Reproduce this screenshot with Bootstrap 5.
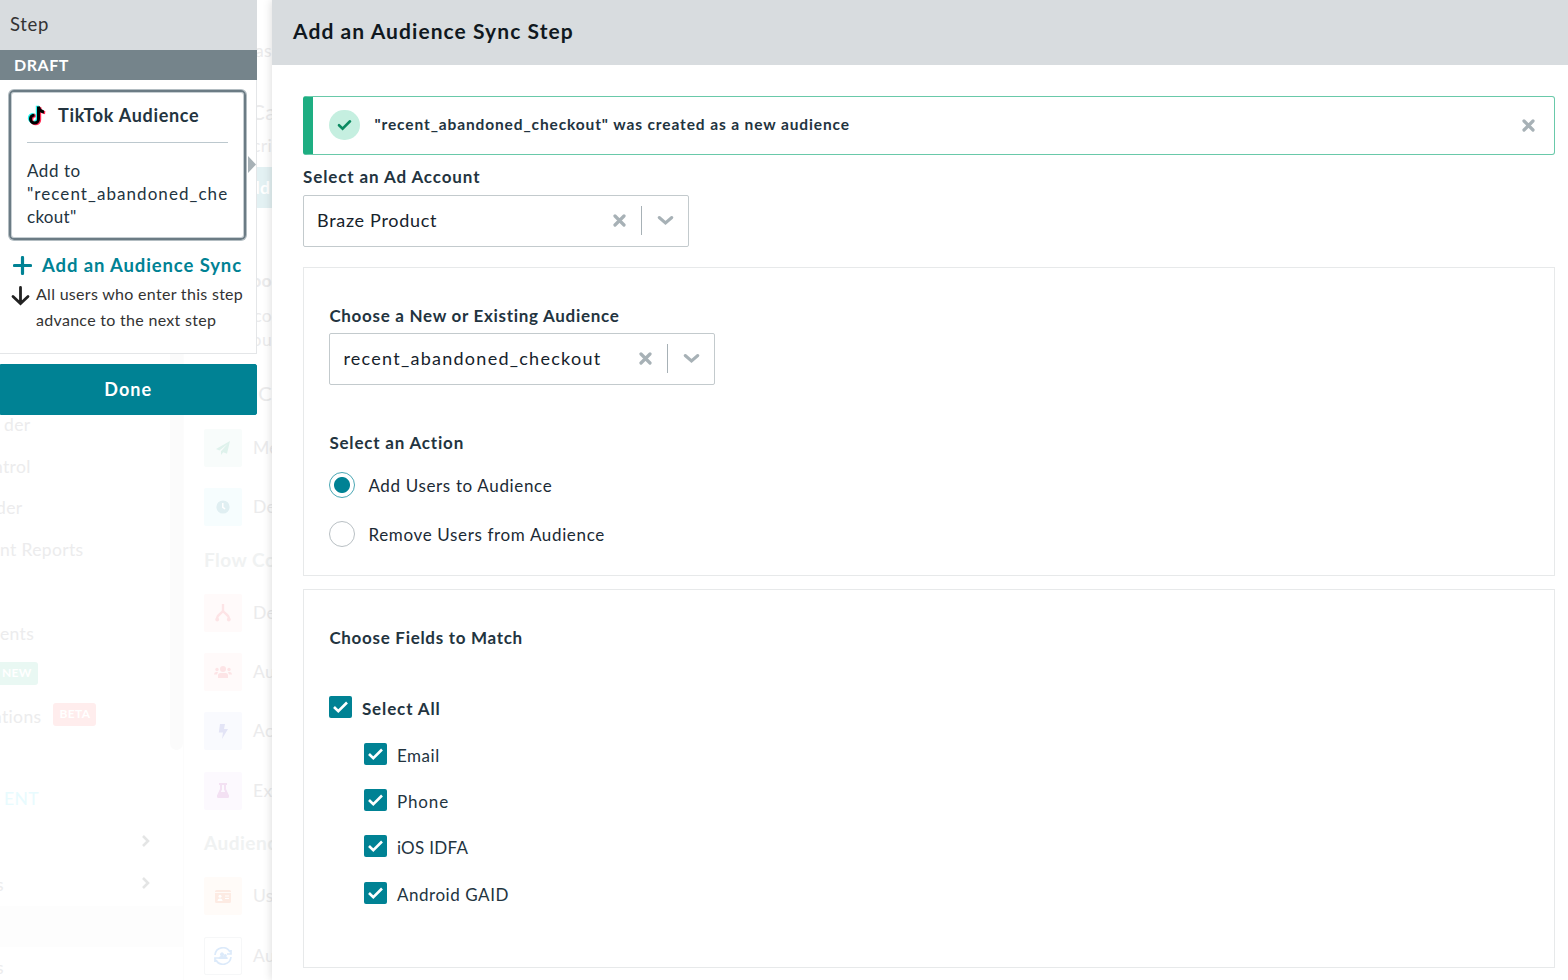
<!DOCTYPE html>
<html lang="en">
<head>
<meta charset="utf-8">
<meta name="viewport" content="width=device-width, initial-scale=1">
<title>Add an Audience Sync Step</title>
<link rel="stylesheet" href="https://cdn.jsdelivr.net/npm/bootstrap@5.3.0/dist/css/bootstrap.min.css">
<style>
:root{--teal:#008294;--ink:#23343f;--mute:#a7b1b6;--bs-body-font-family:Lato,"Open Sans",sans-serif}
body{width:1568px;height:980px;color:var(--ink);letter-spacing:.65px;font-size:17px;line-height:24px;white-space:nowrap}
svg{display:block;flex:none}
/* tracking steps */
.k1{letter-spacing:.3px}
.k2{letter-spacing:.55px}
.k3{letter-spacing:.7px}
.k4{letter-spacing:.88px}
.k5{letter-spacing:1.07px}
.k6{letter-spacing:1.26px}
/* dimmed page behind the drawer */
.side{width:183px;padding-top:404px;color:#ececed;font-size:17.5px;letter-spacing:.35px}
.side .item{height:41.8px}
.side .shade{background:#fdfdfd}
.cut-s{margin-left:-4px}
.cut-m{margin-left:-7px}
.track{width:13px;height:750px;background:#fbfbfb;border-radius:0 0 7px 7px;left:170px;top:0}
.tag{height:23px;font-size:12px;color:#fff;border-radius:3px;padding:0 6px;line-height:22px;margin-bottom:5px}
.rail{border-left:1px solid #fcfcfc;width:89px;padding-left:20px;color:#ebebec;font-size:17.5px;letter-spacing:.35px}
.rail .peek{height:428px;position:relative}
.rail .peek span{position:absolute;left:auto;right:0}
.tile{width:38px;height:38px;border-radius:2px}
.entry{height:39px;margin-bottom:20.3px;gap:11px}
.grp{font-size:19px;font-weight:700;color:#f0f2f2;height:46.6px;line-height:26px;letter-spacing:.5px}
/* step panel */
.step{width:256.500px}
.step-head{height:50px;background:#d8dcdf;font-size:18.5px;color:#333;padding:0 0 3px 10px}
.step-draft{height:30px;background:#75848b;color:#fff;font-size:16px;padding:0 0 1px 14px}
.step-body{height:274px;background:#fff;border:solid #e4e6e8;border-width:0 1px 1px 0;padding:10px 9px 0 9px}
.tt-card{width:237px;height:150px;border:2px solid #6b7b84;border-radius:5px;box-shadow:inset 0 0 0 1px #c6ced2,0 0 0 1px #b3bdc2;padding:9px 16px 0}
.tt-head{height:42px;border-bottom:1px solid #bcc8ce;gap:11px;padding-bottom:13px}
.tt-text{line-height:23px;padding-top:16px}
.notch{left:248px;top:156px;width:8px;height:17px;background:#a7b1b6;clip-path:polygon(0 0,100% 50%,0 100%)}
.add-link{color:var(--teal);font-size:18.5px;gap:10px;margin:13px 0 0 4px}
.note{font-size:16px;color:#333;gap:6px;line-height:26px;margin:4px 0 0 2px}
.btn-teal{--bs-btn-color:#fff;--bs-btn-bg:var(--teal);--bs-btn-border-color:var(--teal);height:51px;margin-top:10px;font-size:18px;font-weight:700;border-radius:0 2px 2px 0}
/* drawer */
.drawer{left:272px;right:0;background:#fff;box-shadow:0 0 9px rgba(0,0,0,.16)}
.drawer-head{height:65px;background:#d8dcdf;color:#101820;font-size:21px;padding:0 0 4px 21px}
.drawer-body{padding:30.500px 13px 0 31px}
.done-note{height:59px;border:1px solid #69c9a9;border-left:10px solid #1eae82;border-radius:3px;font-size:15.5px;padding:0 19px 0 16px}
.done-note>span{position:relative;top:-1px}
.ok{width:30.500px;height:30.500px;background:#c5efe0;margin-right:15px}
.pick{width:386px;height:52px;border:1px solid #c3cacd;border-radius:2px;font-size:18px;color:#16222b;padding:0 14px 1px 13px}
.bar{width:1px;height:29px;background:#a7b1b6;margin:0 15px}
.box{border:1px solid #e7e9ea;padding-left:25.400px}
.form-check-input.rd{width:26px;height:26px;margin:0;border:1px solid #b9c0c4;background-image:none}
.form-check-input.rd:checked{background:radial-gradient(circle,var(--teal) 7.5px,#fff 8.5px);border-color:#4aa7b4}
.opt{gap:13px;height:26px;color:#1b2a35}
.opt span{position:relative;top:1px}
.cb{width:22.500px;height:22px;background:var(--teal);border-radius:2px;margin-right:10px}
.fld{height:46.4px}
.fld .lbl,.sel-all .lbl{position:relative;top:2px}
</style>
</head>
<body class="position-relative overflow-hidden">

<div class="d-flex position-absolute top-0 start-0 h-100">
  <div class="side position-relative">
    <div class="track position-absolute"></div>
    <div class="item d-flex align-items-center"><span class="ps-1">der</span></div>
    <div class="item d-flex align-items-center"><span class="cut-m">ntrol</span></div>
    <div class="item d-flex align-items-center"><span class="cut-s">der</span></div>
    <div class="item d-flex align-items-center">nt Reports</div>
    <div class="item"></div>
    <div class="item d-flex align-items-center">ents</div>
    <div class="item d-flex align-items-center"><span class="tag fw-bold cut-s" style="background:#e9f8f3">NEW</span></div>
    <div class="item d-flex align-items-center"><span class="cut-m">ations</span><span class="tag fw-bold" style="background:#ffeded;margin-left:12px">BETA</span></div>
    <div class="item"></div>
    <div class="item d-flex align-items-center pb-1" style="color:#e8fbfe"><span class="ps-1">ENT</span></div>
    <div class="item d-flex align-items-center justify-content-end" style="padding:0 30px 3px 0"><svg width="14" height="12" viewBox="0 0 14 12"><path d="M4 1l5 5-5 5" fill="none" stroke="#e4e5e5" stroke-width="2.600"/></svg></div>
    <div class="item d-flex align-items-center justify-content-between" style="padding-right:30px"><span class="cut-s">s</span><svg class="mb-1" width="14" height="12" viewBox="0 0 14 12"><path d="M4 1l5 5-5 5" fill="none" stroke="#e4e5e5" stroke-width="2.600"/></svg></div>
    <div class="item shade"></div>
    <div class="item d-flex align-items-center"><span class="cut-s">s</span></div>
  </div>
  <div class="rail">
    <div class="peek">
      <span style="top:39px">as</span><span style="top:100px;font-size:21px;right:-4px">Ca</span><span style="top:134px">cri</span>
      <span class="text-white fw-bold text-center" style="top:167px;height:41px;line-height:41px;background:#e3f1f3;width:24px;right:0">dd</span>
      <span class="fw-bold" style="top:269px">oo</span><span style="top:304px">co</span><span style="top:328px">ou</span><span style="top:381px;font-size:20px">C</span>
    </div>
    <div class="entry d-flex align-items-center"><div class="tile d-flex align-items-center justify-content-center flex-shrink-0" style="background:#f8fcfb"><svg width="14" height="14" viewBox="0 0 14 14" fill="#dff2ec"><path d="M14 0L0 8l3.4 1.4L11.5 3 5 10.3V14l2.3-2.8 3.7 1.6z"/></svg></div>Me</div>
    <div class="entry d-flex align-items-center"><div class="tile d-flex align-items-center justify-content-center flex-shrink-0" style="background:#f6fdfe"><svg width="14" height="14" viewBox="0 0 14 14"><circle cx="7" cy="7" r="6.6" fill="#e0eff2"/><path d="M6.8 3v4.3l2.3 1.5" fill="none" stroke="#fff" stroke-width="1.5"/></svg></div>De</div>
    <div class="grp">Flow Co</div>
    <div class="entry d-flex align-items-center"><div class="tile d-flex align-items-center justify-content-center flex-shrink-0" style="background:#fffafa"><svg width="16" height="18" viewBox="0 0 16 18"><path d="M8 0v6.500C7.500 9.500 2 10 2 15M8 6.500c.5 3 6 3.500 6 8.500" fill="none" stroke="#fde4e6" stroke-width="2.300"/><circle cx="2.200" cy="15.500" r="1.900" fill="#fde4e6"/><circle cx="13.800" cy="15.500" r="1.900" fill="#fde4e6"/></svg></div>De</div>
    <div class="entry d-flex align-items-center"><div class="tile d-flex align-items-center justify-content-center flex-shrink-0" style="background:#fffafa"><svg width="18" height="12" viewBox="0 0 18 12" fill="#fde4e6"><circle cx="9" cy="3" r="3"/><circle cx="3" cy="3.5" r="1.7"/><circle cx="15" cy="3.5" r="1.7"/><path d="M4 12V9.500q0-2.500 2.500-2.500h5q2.500 0 2.500 2.500V12zM0 8.500Q0 6 2 6h2L3 8.500zM18 8.500Q18 6 16 6h-2l1 2.500z"/></svg></div>Au</div>
    <div class="entry d-flex align-items-center"><div class="tile d-flex align-items-center justify-content-center flex-shrink-0" style="background:#f9fafe"><svg width="10" height="15" viewBox="0 0 10 15" fill="#e3e4f6"><path d="M2 0h5L6 5h4L4 15l1-6.500H.8z"/></svg></div>Ac</div>
    <div class="entry d-flex align-items-center"><div class="tile d-flex align-items-center justify-content-center flex-shrink-0" style="background:#fcf9fe"><svg width="12" height="15" viewBox="0 0 12 15" fill="#f3e1f3"><path fill-rule="evenodd" d="M2 0h8v2H9v4l3 6.500q.6 2.500-1.500 2.500h-9Q-.6 15 0 12.500L3 6V2H2zm3 2v4.500L3.800 9h4.400L7 6.500V2z"/></svg></div>Exp</div>
    <div class="grp">Audience</div>
    <div class="entry d-flex align-items-center"><div class="tile d-flex align-items-center justify-content-center flex-shrink-0" style="background:#fffbf8"><svg width="16" height="13" viewBox="0 0 16 13"><path d="M0 1.500Q0 0 1.500 0h13Q16 0 16 1.500V2H0zM0 3h16v8.500q0 1.500-1.500 1.500h-13Q0 13 0 11.500z" fill="#fdebe3"/><path d="M10 6h4M10 8.500h4" stroke="#fff"/><circle cx="5" cy="6.300" r="1.500" fill="#fff"/><path d="M2.500 11q0-2.500 2.500-2.500T7.500 11z" fill="#fff"/></svg></div>Us</div>
    <div class="entry d-flex align-items-center"><div class="tile d-flex align-items-center justify-content-center flex-shrink-0 border" style="border-color:#f6f7f8!important"><svg width="18" height="18" viewBox="0 0 18 18"><path d="M1 8a8 8 0 0 1 15-3M17 10a8 8 0 0 1-15 3M17 3v4h-4M1 15v-4h4" fill="none" stroke="#dceafa" stroke-width="1.7"/><path d="M4.500 12q0-2.500 2.200-3a2 2 0 1 1 2.600 0l1 .6a1.500 1.500 0 1 1 2 0q1.500.4 1.500 2.400z" fill="#dceafa"/></svg></div>Au</div>
  </div>
</div>

<aside class="step position-absolute top-0 start-0">
  <div class="step-head d-flex align-items-center"><span class="k3">Step</span></div>
  <div class="step-draft d-flex align-items-center fw-bold"><span class="k2">DRAFT</span></div>
  <div class="step-body">
    <div class="tt-card">
      <div class="tt-head d-flex align-items-center fw-bold">
        <svg width="20" height="21" viewBox="0 0 20 21" fill="none" stroke-width="3"><g stroke="#25f4ee" transform="translate(-1.200 -.8)"><path d="M11.500 1.500v12.500a4 4 0 1 1-4-4M11.500 1.500q.8 5 5.500 5.500"/></g><g stroke="#fe2c55" transform="translate(1.200 .8)"><path d="M11.500 1.500v12.500a4 4 0 1 1-4-4M11.500 1.500q.8 5 5.500 5.500"/></g><path stroke="#000" d="M11.500 1.500v12.500a4 4 0 1 1-4-4M11.500 1.500q.8 5 5.500 5.500"/></svg>
        <span class="k3" style="font-size:18px">TikTok Audience</span>
      </div>
      <div class="tt-text"><span class="k2">Add to</span><br><span class="k5">"recent_abandoned_che</span><br><span class="k1">ckout"</span></div>
    </div>
    <div class="add-link d-flex align-items-center fw-bold"><svg width="19" height="19" viewBox="0 0 19 19"><path d="M9.500 1.500v16M1.500 9.500h16" stroke="#008294" stroke-width="3.200" stroke-linecap="round"/></svg><span class="k4">Add an Audience Sync</span></div>
    <div class="note d-flex"><svg style="margin-top:5px" width="19" height="20" viewBox="0 0 19 20"><path d="M9.500 1.500v15.500M2 10.500l7.500 7 7.500-7" fill="none" stroke="#222" stroke-width="2.800" stroke-linecap="round"/></svg><div class="k1">All users who enter this step<br>advance to the next step</div></div>
  </div>
  <div class="notch position-absolute"></div>
  <button class="btn btn-teal w-100"><span class="k5">Done</span></button>
</aside>

<main class="drawer position-absolute top-0 h-100">
  <div class="drawer-head d-flex align-items-center fw-bold k5">Add an Audience Sync Step</div>
  <div class="drawer-body">
    <div class="done-note d-flex align-items-center fw-bold">
      <div class="ok rounded-circle d-flex align-items-center justify-content-center"><svg width="15" height="12" viewBox="0 0 15 12"><path d="M2 6.200l3.600 3.400L13 2.300" fill="none" stroke="#0b8a61" stroke-width="2.600" stroke-linecap="round"/></svg></div>
      <span class="k4">"recent_abandoned_checkout" was created as a new audience</span>
      <svg class="ms-auto" width="13" height="13" viewBox="0 0 13 13"><path d="M2 2l9 9M11 2l-9 9" stroke="#a7b1b6" stroke-width="3.200" stroke-linecap="round"/></svg>
    </div>
    <div class="fw-bold k4" style="margin:10px 0 6px">Select an Ad Account</div>
    <div class="pick d-flex align-items-center"><span class="k3 me-auto">Braze Product</span>
      <svg width="13" height="13" viewBox="0 0 13 13"><path d="M2 2l9 9M11 2l-9 9" stroke="#a7b1b6" stroke-width="3.200" stroke-linecap="round"/></svg><div class="bar"></div><svg width="17" height="11" viewBox="0 0 17 11"><path d="M2.200 2.500l6.300 5.500 6.300-5.500" fill="none" stroke="#a7b1b6" stroke-width="3" stroke-linecap="round"/></svg></div>

    <section class="box" style="height:309px;margin-top:20px;padding-top:36px">
      <div class="fw-bold k3">Choose a New or Existing Audience</div>
      <div class="pick d-flex align-items-center" style="margin-top:5px"><span class="k6 me-auto">recent_abandoned_checkout</span>
        <svg width="13" height="13" viewBox="0 0 13 13"><path d="M2 2l9 9M11 2l-9 9" stroke="#a7b1b6" stroke-width="3.200" stroke-linecap="round"/></svg><div class="bar"></div><svg width="17" height="11" viewBox="0 0 17 11"><path d="M2.200 2.500l6.300 5.500 6.300-5.500" fill="none" stroke="#a7b1b6" stroke-width="3" stroke-linecap="round"/></svg></div>
      <div class="fw-bold" style="margin-top:46px;letter-spacing:.8px">Select an Action</div>
      <label class="opt d-flex align-items-center" style="margin-top:17px"><input class="form-check-input rd" type="radio" name="act" checked><span>Add Users to Audience</span></label>
      <label class="opt d-flex align-items-center" style="margin-top:23px"><input class="form-check-input rd" type="radio" name="act"><span>Remove Users from Audience</span></label>
    </section>

    <section class="box" style="height:379px;margin-top:13px;padding-top:36px">
      <div class="fw-bold k3">Choose Fields to Match</div>
      <div class="sel-all d-flex align-items-center fw-bold" style="margin-top:45px"><span class="cb d-flex align-items-center justify-content-center"><svg width="17" height="14" viewBox="0 0 17 14"><path d="M2 7l4.300 4.200L15 2.500" fill="none" stroke="#fff" stroke-width="2.600"/></svg></span><span class="lbl k4">Select All</span></div>
      <div style="padding-left:35px;margin-top:12px">
        <div class="fld d-flex align-items-center"><span class="cb d-flex align-items-center justify-content-center"><svg width="17" height="14" viewBox="0 0 17 14"><path d="M2 7l4.300 4.200L15 2.500" fill="none" stroke="#fff" stroke-width="2.600"/></svg></span><span class="lbl k2">Email</span></div>
        <div class="fld d-flex align-items-center"><span class="cb d-flex align-items-center justify-content-center"><svg width="17" height="14" viewBox="0 0 17 14"><path d="M2 7l4.300 4.200L15 2.500" fill="none" stroke="#fff" stroke-width="2.600"/></svg></span><span class="lbl k4">Phone</span></div>
        <div class="fld d-flex align-items-center"><span class="cb d-flex align-items-center justify-content-center"><svg width="17" height="14" viewBox="0 0 17 14"><path d="M2 7l4.300 4.200L15 2.500" fill="none" stroke="#fff" stroke-width="2.600"/></svg></span><span class="lbl k1">iOS IDFA</span></div>
        <div class="fld d-flex align-items-center"><span class="cb d-flex align-items-center justify-content-center"><svg width="17" height="14" viewBox="0 0 17 14"><path d="M2 7l4.300 4.200L15 2.500" fill="none" stroke="#fff" stroke-width="2.600"/></svg></span><span class="lbl k2">Android GAID</span></div>
      </div>
    </section>
  </div>
</main>
<script src="https://cdn.jsdelivr.net/npm/bootstrap@5.3.0/dist/js/bootstrap.bundle.min.js"></script>
</body>
</html>
